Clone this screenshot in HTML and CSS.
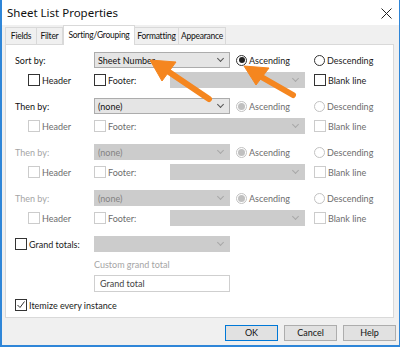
FILE: index.html
```html
<!DOCTYPE html>
<html lang="en">
<head>
    <meta charset="UTF-8">
    <title>Sheet List Properties</title>
    <link rel="stylesheet" href="styles.css">
</head>
<body>
    <div class="window">
        <div class="titlebar">
            <span class="title">Sheet List Properties</span>
            <svg class="close" width="11" height="11" viewBox="0 0 11 11"><path d="M0.5 0.5 L10.5 10.5 M10.5 0.5 L0.5 10.5" stroke="#222" stroke-width="1"/></svg>
        </div>

        <div class="tabs">
            <div class="tab t-fields">Fields</div>
            <div class="tab t-filter">Filter</div>
            <div class="tab active">Sorting/Grouping</div>
            <div class="tab t-format">Formatting</div>
            <div class="tab t-appear">Appearance</div>
        </div>

        <div class="panel">
            <!-- sort by -->
            <div class="row first">
                <span class="label">Sort by:</span>
                <div class="combo"><span>Sheet Number</span><i class="chev"></i></div>
                <label class="radio on"><b></b>Ascending</label>
                <label class="radio desc"><b></b>Descending</label>
            </div>
            <div class="row sub">
                <label class="check hdr"><b></b>Header</label>
                <label class="check ftr"><b></b>Footer:</label>
                <div class="combo wide off"><span></span><i class="chev"></i></div>
                <label class="check blank"><b></b>Blank line</label>
            </div>

            <!-- then by -->
            <div class="row group">
                <span class="label">Then by:</span>
                <div class="combo"><span>(none)</span><i class="chev"></i></div>
                <label class="radio dis sel"><b></b>Ascending</label>
                <label class="radio dis desc"><b></b>Descending</label>
            </div>
            <div class="row sub dim">
                <label class="check hdr"><b></b>Header</label>
                <label class="check ftr"><b></b>Footer:</label>
                <div class="combo wide off"><span></span><i class="chev"></i></div>
                <label class="check blank"><b></b>Blank line</label>
            </div>

            <div class="row group dim">
                <span class="label faint">Then by:</span>
                <div class="combo off"><span>(none)</span><i class="chev"></i></div>
                <label class="radio dis sel"><b></b>Ascending</label>
                <label class="radio dis desc"><b></b>Descending</label>
            </div>
            <div class="row sub dim">
                <label class="check hdr"><b></b>Header</label>
                <label class="check ftr"><b></b>Footer:</label>
                <div class="combo wide off"><span></span><i class="chev"></i></div>
                <label class="check blank"><b></b>Blank line</label>
            </div>

            <div class="row group dim">
                <span class="label faint">Then by:</span>
                <div class="combo off"><span>(none)</span><i class="chev"></i></div>
                <label class="radio dis sel"><b></b>Ascending</label>
                <label class="radio dis desc"><b></b>Descending</label>
            </div>
            <div class="row sub dim">
                <label class="check hdr"><b></b>Header</label>
                <label class="check ftr"><b></b>Footer:</label>
                <div class="combo wide off"><span></span><i class="chev"></i></div>
                <label class="check blank"><b></b>Blank line</label>
            </div>

            <!-- grand totals -->
            <div class="row group totals">
                <label class="check lead"><b></b>Grand totals:</label>
                <div class="combo off"><span></span><i class="chev"></i></div>
            </div>
            <div class="row plain">
                <span class="hint">Custom grand total</span>
            </div>
            <div class="row plain">
                <div class="textbox">Grand total</div>
            </div>
            <div class="row itemize">
                <label class="check lead full"><b><svg width="10" height="10" viewBox="0 0 10 10"><path d="M1.5 5 L4 7.5 L8.5 1.5" fill="none" stroke="#333" stroke-width="1"/></svg></b>Itemize every instance</label>
            </div>
        </div>

        <div class="buttons">
            <div class="btn default">OK</div>
            <div class="btn">Cancel</div>
            <div class="btn">Help</div>
        </div>

        <svg class="arrows" width="400" height="347" viewBox="0 0 400 347">
            <g fill="#f5861f" stroke="#f5861f" stroke-linejoin="round">
                <line x1="209" y1="99" x2="166" y2="70" stroke-width="6" stroke-linecap="round"/>
                <polygon points="150,60 176,62 162,81" stroke-width="1"/>
                <line x1="293" y1="95" x2="258" y2="75" stroke-width="6" stroke-linecap="round"/>
                <polygon points="244,66 269,68 256,85" stroke-width="1"/>
            </g>
        </svg>
    </div>
</body>
</html>
```

FILE: styles.css
```css
* {
    margin: 0;
    padding: 0;
    box-sizing: border-box;
}

body {
    font-family: Lato, 'Noto Sans', sans-serif;
    font-size: 9px;
    color: #1a1a1a;
    background: #fff;
}

.window {
    position: relative;
    width: 400px;
    height: 347px;
    background: #f0f0f0;
    border-left: 2px solid #2f86d8;
    border-right: 1px solid #2f86d8;
    border-bottom: 2px solid #2f86d8;
    overflow: hidden;
}

.titlebar {
    height: 25px;
    background: #fff;
    display: flex;
    align-items: center;
    justify-content: space-between;
    padding: 0 7px 0 5px;
}

.title {
    font-family: 'Noto Sans', sans-serif;
    font-size: 11.5px;
    color: #111;
}

.close {
    margin-top: 1px;
}

/* tabs */
.tabs {
    display: flex;
    align-items: flex-end;
    height: 20px;
    padding-left: 3px;
    position: relative;
    z-index: 2;
    font-size: 8.5px;
    letter-spacing: -0.25px;
}

.tab {
    height: 17px;
    line-height: 16px;
    text-align: center;
    white-space: nowrap;
    border: 1px solid #d9d9d9;
    border-bottom: none;
    background: #f0f0f0;
    color: #111;
    margin-right: -1px;
    margin-bottom: 1px;
}

.t-fields { width: 32px; }
.t-filter { width: 27px; }
.t-format { width: 45px; }
.t-appear { width: 48px; }

.tab.active {
    width: 72px;
    height: 20px;
    line-height: 18px;
    background: #fff;
    margin: 0 -1px 0 1px;
    border-bottom: none;
}

.panel {
    position: relative;
    z-index: 1;
    margin: -1px 5px 0 3px;
    height: 274px;
    background: #fff;
    border: 1px solid #d9d9d9;
    padding: 7px 0 0 9px;
}

/* rows share one column grid */
.row {
    display: grid;
    grid-template-columns: 13px 66px 76px 60px 6px 69px 9px 1fr;
    height: 16px;
    align-items: center;
}

.row.sub { margin-top: 4px; }
.row.group { margin-top: 9px; }
.row.group + .row.sub { margin-top: 4px; }
.row.sub + .row.group { margin-top: 10px; }
.row.plain { margin-top: 4px; }
.row.plain + .row.plain { margin-top: 3px; height: 17px; }
.row.itemize { margin-top: 5px; }

.label {
    grid-column: 1 / 3;
    color: #111;
}

.label.faint {
    color: #a5a5a5;
}

.combo {
    grid-column: 3 / 5;
    height: 16px;
    background: #e5e5e5;
    border: 1px solid #acacac;
    display: flex;
    align-items: center;
    justify-content: space-between;
    padding: 0 6px 0 3px;
    color: #111;
}

.combo.off {
    background: #cccccc;
    border-color: #cccccc;
    color: #838383;
}

.combo.wide {
    grid-column: 4 / 7;
}

.chev {
    width: 5px;
    height: 5px;
    border-right: 1px solid #555;
    border-bottom: 1px solid #555;
    transform: rotate(45deg);
    margin-top: -3px;
}

.combo.off .chev {
    border-color: #a8a8a8;
}

.radio, .check {
    display: flex;
    align-items: center;
    gap: 1px;
    white-space: nowrap;
}

.radio {
    grid-column: 6 / 8;
}

.radio.desc {
    grid-column: 8;
}

.radio b {
    width: 11px;
    height: 11px;
    border: 1px solid #333;
    border-radius: 50%;
    display: flex;
    align-items: center;
    justify-content: center;
    margin-right: 1px;
}

.radio.on b::after {
    content: '';
    width: 6px;
    height: 6px;
    border-radius: 50%;
    background: #222;
}

.radio.dis {
    color: #6d6d6d;
}

.radio.dis b {
    border-color: #c2c2c2;
}

.radio.dis.sel b::after {
    content: '';
    width: 7px;
    height: 7px;
    border-radius: 50%;
    background: #c0c0c0;
}

.check b {
    width: 12px;
    height: 12px;
    border: 1px solid #333;
    background: #fff;
    margin-right: 1px;
    display: flex;
    align-items: center;
    justify-content: center;
}

.check.hdr { grid-column: 2; }
.check.ftr { grid-column: 3; }
.check.blank { grid-column: 8; }
.check.lead { grid-column: 1 / 3; }
.check.lead.full { grid-column: 1 / 5; }

.dim .check {
    color: #6d6d6d;
}

.dim .check b {
    border-color: #cccccc;
}

.dim .radio b {
    border-color: #c2c2c2;
}

.hint {
    grid-column: 3 / 6;
    color: #a5a5a5;
}

.textbox {
    grid-column: 3 / 5;
    height: 17px;
    border: 1px solid #cfcfcf;
    line-height: 15px;
    padding-left: 5px;
    color: #444;
}

/* dialog buttons */
.buttons {
    display: flex;
    justify-content: flex-end;
    gap: 6px;
    padding: 7px 3px 0 0;
}

.btn {
    width: 53px;
    height: 16px;
    background: #e1e1e1;
    border: 1px solid #adadad;
    text-align: center;
    line-height: 14px;
    color: #111;
}

.btn.default {
    border-color: #0078d7;
}

.arrows {
    position: absolute;
    left: -2px;
    top: 0;
    pointer-events: none;
    z-index: 5;
}
```
